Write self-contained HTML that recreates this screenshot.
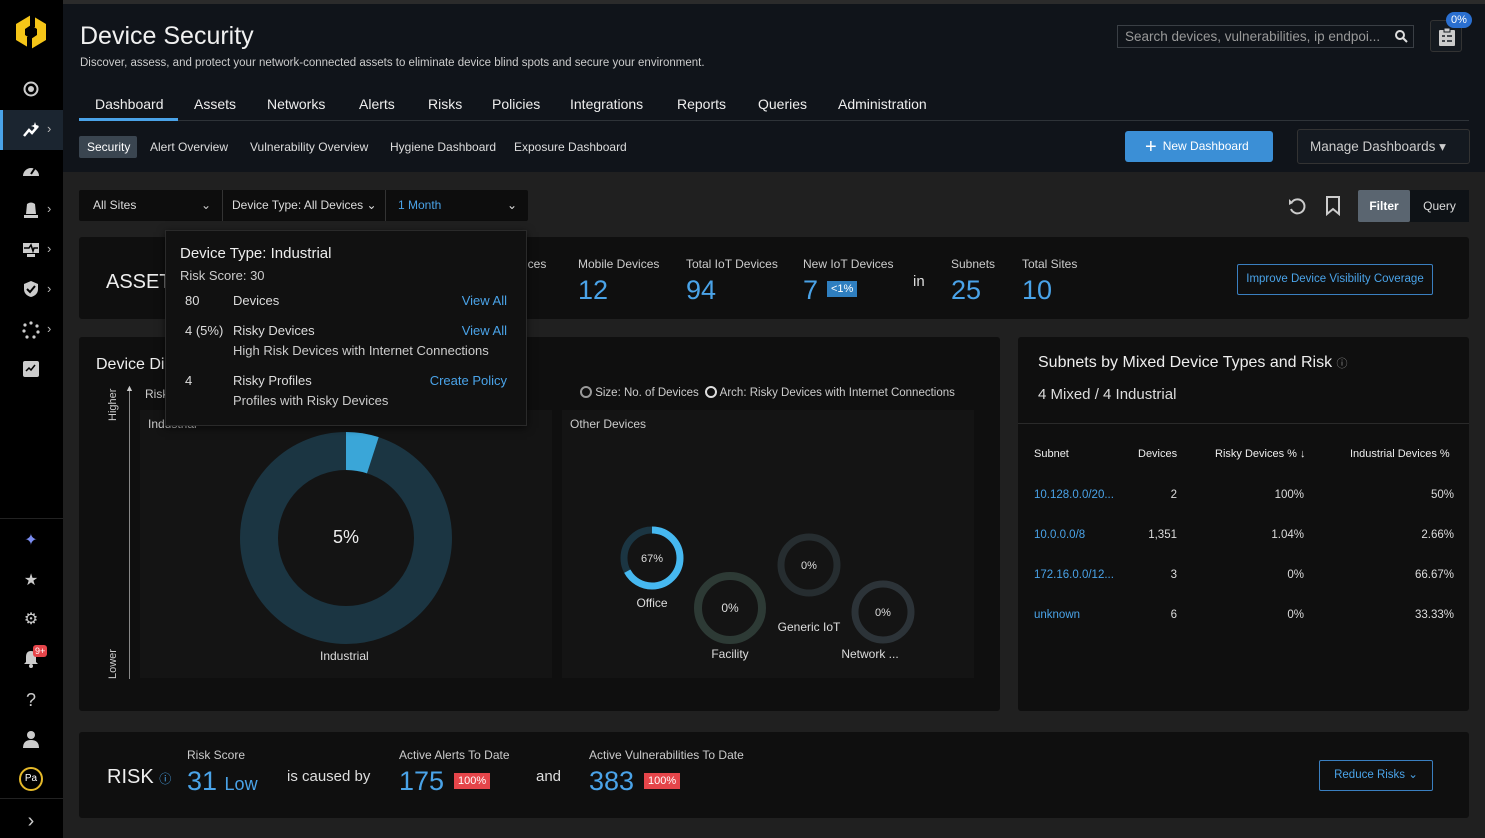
<!DOCTYPE html>
<html><head><meta charset="utf-8">
<style>
*{margin:0;padding:0;box-sizing:border-box}
body{width:1485px;height:838px;overflow:hidden;background:#202020;font-family:"Liberation Sans",sans-serif;color:#ddd;position:relative}
.a{position:absolute}
.blue{color:#4aa3e8}
.card{position:absolute;background:#0f0f0f;border-radius:3px}
.sb{position:absolute;left:0;top:0;width:63px;height:838px;background:#000}
.ic{position:absolute;left:22px;width:18px;height:18px;color:#ccc;font-size:16px;text-align:center}
.chev{position:absolute;left:47px;color:#bbb;font-size:13px}
.lbl{font-size:12px;color:#ccc}
.big{font-size:27px;color:#4aa3e8}
</style></head><body>
<div class="a" style="left:63px;top:0;width:1422px;height:172px;background:#10141a"></div>
<div class="a" style="left:63px;top:0;width:1422px;height:4px;background:#2b2b2b"></div>
<div class="sb">
 <svg class="a" style="left:15px;top:14px" width="32" height="36" viewBox="0 0 32 36"><path d="M16 1 L31 10 L31 26 L16 35 L1 26 L1 10Z" fill="#f5c518"/><path d="M16 11 L22 15 L22 21 L16 25 L10 21 L10 15Z" fill="#000"/><rect x="15" y="0" width="5" height="13" fill="#000"/><rect x="12" y="23" width="5" height="13" fill="#000"/></svg>
 <svg class="a" style="left:23px;top:81px" width="16" height="16"><circle cx="8" cy="8" r="6.5" fill="none" stroke="#ccc" stroke-width="2"/><circle cx="8" cy="8" r="3" fill="#ccc"/></svg>
 <div class="a" style="left:0;top:110px;width:63px;height:40px;background:#1b2530;border-left:3px solid #4aa3e8"></div>
 <svg class="a" style="left:22px;top:121px" width="18" height="18"><path d="M2 15 L7 9 L10 12 L16 5" fill="none" stroke="#fff" stroke-width="2.5"/><path d="M13 1 L14 4 L17 5 L14 6 L13 9 L12 6 L9 5 L12 4Z" fill="#fff"/></svg><div class="chev" style="top:121px">›</div>
 <svg class="a" style="left:22px;top:162px" width="18" height="16"><path d="M1 14 A8 8 0 1 1 17 14Z" fill="#ccc"/><path d="M9 12 L13 6" stroke="#000" stroke-width="2"/></svg>
 <svg class="a" style="left:22px;top:200px" width="18" height="18"><path d="M4 14 L5 4 Q9 1 13 4 L14 14Z" fill="#ccc"/><rect x="2" y="15" width="14" height="3" fill="#ccc"/></svg><div class="chev" style="top:201px">›</div>
 <svg class="a" style="left:22px;top:242px" width="18" height="16"><rect x="1" y="1" width="16" height="10" fill="#ccc"/><path d="M2 6 L7 6 L9 3 L11 9 L12 6 L16 6" stroke="#000" stroke-width="1.5" fill="none"/><rect x="5" y="12" width="8" height="3" fill="#ccc"/></svg><div class="chev" style="top:241px">›</div>
 <svg class="a" style="left:22px;top:280px" width="18" height="18"><path d="M9 1 L16 4 L16 9 Q16 15 9 17 Q2 15 2 9 L2 4Z" fill="#ccc"/><path d="M5 9 L8 12 L13 6" stroke="#000" stroke-width="2" fill="none"/></svg><div class="chev" style="top:281px">›</div>
 <svg class="a" style="left:22px;top:321px" width="18" height="18" fill="#ccc"><circle cx="9" cy="2" r="1.6"/><circle cx="15" cy="5" r="1.6"/><circle cx="16" cy="11" r="1.6"/><circle cx="12" cy="16" r="1.6"/><circle cx="5" cy="16" r="1.6"/><circle cx="2" cy="10" r="1.6"/><circle cx="3" cy="4" r="1.6"/></svg><div class="chev" style="top:321px">›</div>
 <svg class="a" style="left:23px;top:361px" width="16" height="16"><rect x="0" y="0" width="16" height="16" rx="2" fill="#ccc"/><path d="M3 10 L6 7 L8 9 L12 4" stroke="#000" stroke-width="1.5" fill="none"/></svg>
 <div class="a" style="left:0;top:518px;width:63px;height:1px;background:#222"></div>
 <div class="ic" style="top:530px;color:#7a8cf0">✦</div>
 <div class="ic" style="top:570px">★</div>
 <div class="ic" style="top:609px">⚙</div>
 <svg class="a" style="left:23px;top:650px" width="16" height="18"><path d="M8 1 Q3 1 3 7 L3 12 L1 14 L15 14 L13 12 L13 7 Q13 1 8 1Z" fill="#ccc"/><circle cx="8" cy="16" r="2" fill="#ccc"/></svg>
 <div class="a" style="left:33px;top:645px;background:#e5454a;color:#fff;font-size:9px;padding:1px 2px;border-radius:3px">9+</div>
 <div class="ic" style="top:690px;font-size:18px">?</div>
 <svg class="a" style="left:22px;top:730px" width="18" height="18" fill="#ccc"><circle cx="9" cy="5" r="4"/><path d="M1 18 Q1 10 9 10 Q17 10 17 18Z"/></svg>
 <div class="a" style="left:19px;top:767px;width:24px;height:24px;border:2px solid #e5b92a;border-radius:50%;font-size:10px;text-align:center;line-height:20px;color:#fff">Pa</div>
 <div class="a" style="left:0;top:798px;width:63px;height:1px;background:#222"></div>
 <div class="ic" style="top:810px;font-size:20px">›</div>
</div>

<div class="a" style="left:80px;top:22px;font-size:25px;color:#f0f0f0">Device Security</div>
<div class="a" style="left:80px;top:57px;font-size:11.5px;color:#ccc">Discover, assess, and protect your network-connected assets to eliminate device blind spots and secure your environment.</div>
<div class="a" style="left:1117px;top:25px;width:297px;height:23px;border:1px solid #3a3f45;font-size:13.5px;color:#999;padding:3px 7px">Search devices, vulnerabilities, ip endpoi...<svg style="position:absolute;right:5px;top:4px" width="13" height="13"><circle cx="5" cy="5" r="4" fill="none" stroke="#ddd" stroke-width="2"/><path d="M8 8 L12 12" stroke="#ddd" stroke-width="2"/></svg></div>
<div class="a" style="left:1430px;top:20px;width:32px;height:32px;border:1px solid #333;border-radius:3px;background:#151a20"><svg style="position:absolute;left:7px;top:6px" width="18" height="20"><rect x="1" y="3" width="16" height="16" rx="1" fill="#ccc"/><rect x="6" y="1" width="6" height="4" fill="#ccc" stroke="#151a20"/><path d="M4 9 L7 9 M9 9 L14 9 M4 14 L7 14 M9 14 L14 14" stroke="#151a20" stroke-width="1.5"/></svg></div>
<div class="a" style="left:1446px;top:12px;background:#2a6fd0;border-radius:9px;font-size:11px;color:#fff;padding:2px 5px">0%</div>

<div class="a" style="left:80px;top:96px;font-size:14px;color:#eee;white-space:nowrap">
<span style="position:absolute;left:15px">Dashboard</span><span style="position:absolute;left:114px">Assets</span><span style="position:absolute;left:187px">Networks</span><span style="position:absolute;left:279px">Alerts</span><span style="position:absolute;left:348px">Risks</span><span style="position:absolute;left:412px">Policies</span><span style="position:absolute;left:490px">Integrations</span><span style="position:absolute;left:597px">Reports</span><span style="position:absolute;left:678px">Queries</span><span style="position:absolute;left:758px">Administration</span></div>
<div class="a" style="left:79px;top:120px;width:1390px;height:1px;background:#2e3338"></div>
<div class="a" style="left:79px;top:118px;width:99px;height:3px;background:#4aa3e8"></div>

<div class="a" style="left:79px;top:136px;width:58px;height:22px;background:#3a4550;border-radius:2px"></div>
<div class="a" style="top:140px;left:80px;font-size:12px;color:#ddd;white-space:nowrap"><span style="position:absolute;left:7px;color:#fff">Security</span><span style="position:absolute;left:70px">Alert Overview</span><span style="position:absolute;left:170px">Vulnerability Overview</span><span style="position:absolute;left:310px">Hygiene Dashboard</span><span style="position:absolute;left:434px">Exposure Dashboard</span></div>
<div class="a" style="left:1125px;top:131px;width:148px;height:31px;background:#3b8fd6;border-radius:3px;color:#fff;font-size:12px;line-height:31px;padding-left:20px"><span style="font-size:20px;vertical-align:-3px;margin-right:6px">+</span>New Dashboard</div>
<div class="a" style="left:1297px;top:129px;width:173px;height:35px;border:1px solid #333;background:#141920;border-radius:3px;color:#ccc;font-size:13.5px;line-height:33px;padding-left:12px">Manage Dashboards ▾</div>

<div class="a" style="left:79px;top:190px;width:449px;height:31px;background:#0d0d0d;border-radius:2px;font-size:12px;line-height:31px">
<span class="a" style="left:14px">All Sites</span><span class="a" style="left:122px;color:#ccc">⌄</span>
<div class="a" style="left:143px;top:0;width:1px;height:31px;background:#333"></div>
<span class="a" style="left:153px">Device Type: All Devices ⌄</span>
<div class="a" style="left:306px;top:0;width:1px;height:31px;background:#333"></div>
<span class="a blue" style="left:319px">1 Month</span><span class="a" style="left:428px">⌄</span></div>
<svg class="a" style="left:1287px;top:196px" width="20" height="20"><path d="M5 6 A7 7 0 1 1 4 13" fill="none" stroke="#ccc" stroke-width="2"/><path d="M2 3 L6 7 L2 9Z" fill="#ccc"/></svg>
<svg class="a" style="left:1325px;top:196px" width="16" height="20"><path d="M2 1 L14 1 L14 18 L8 13 L2 18Z" fill="none" stroke="#ccc" stroke-width="2"/></svg>
<div class="a" style="left:1358px;top:190px;width:52px;height:32px;background:#5a6570;border-radius:2px;color:#fff;font-size:12px;font-weight:bold;text-align:center;line-height:32px">Filter</div>
<div class="a" style="left:1410px;top:190px;width:59px;height:32px;background:#0e1216;color:#ddd;font-size:12px;text-align:center;line-height:32px">Query</div>

<div class="card" style="left:79px;top:237px;width:1390px;height:82px">
 <div class="a" style="left:27px;top:34px;font-size:20px;color:#eee">ASSET</div>
 <div class="a lbl" style="left:440px;top:20px">vices</div>
 <div class="a lbl" style="left:499px;top:20px">Mobile Devices</div><div class="a big" style="left:499px;top:38px">12</div>
 <div class="a lbl" style="left:607px;top:20px">Total IoT Devices</div><div class="a big" style="left:607px;top:38px">94</div>
 <div class="a lbl" style="left:724px;top:20px">New IoT Devices</div><div class="a big" style="left:724px;top:38px">7</div>
 <div class="a" style="left:748px;top:44px;background:#2f7fc0;color:#fff;font-size:11px;padding:2px 4px">&lt;1%</div>
 <div class="a" style="left:834px;top:36px;font-size:15px;color:#ddd">in</div>
 <div class="a lbl" style="left:872px;top:20px">Subnets</div><div class="a big" style="left:872px;top:38px">25</div>
 <div class="a lbl" style="left:943px;top:20px">Total Sites</div><div class="a big" style="left:943px;top:38px">10</div>
 <div class="a" style="left:1158px;top:27px;width:196px;height:31px;border:1px solid #3a7fc0;border-radius:2px;color:#4aa3e8;font-size:11.5px;text-align:center;line-height:29px">Improve Device Visibility Coverage</div>
</div>

<div class="card" style="left:79px;top:337px;width:921px;height:374px">
 <div class="a" style="left:17px;top:19px;font-size:16px;color:#eee">Device Di</div>
 <div class="a" style="left:501px;top:49px;font-size:11.5px;color:#ccc"><span style="display:inline-block;width:12px;height:12px;border:2px solid #999;border-radius:50%;vertical-align:-2px"></span> Size: No. of Devices &nbsp;<span style="display:inline-block;width:12px;height:12px;border:2px solid #ddd;border-radius:50%;vertical-align:-2px"></span> Arch: Risky Devices with Internet Connections</div>
 <div class="a" style="left:28px;font-size:11px;color:#ccc;transform:rotate(-90deg);transform-origin:left top;top:84px">Higher</div>
 <div class="a" style="left:28px;top:342px;font-size:11px;color:#ccc;transform:rotate(-90deg);transform-origin:left top">Lower</div>
 <div class="a" style="left:50px;top:52px;width:1px;height:290px;background:#888"></div>
 <div class="a" style="left:46px;top:46px;font-size:9px;color:#ccc">▲</div>
 <div class="a" style="left:66px;top:50px;font-size:12px;color:#ccc">Risk</div>
 <div class="a" style="left:61px;top:73px;width:412px;height:268px;background:#141414"></div>
 <div class="a" style="left:69px;top:80px;font-size:12px;color:#ccc">Industrial</div>
 <svg class="a" style="left:159px;top:93px" width="216" height="216"><circle cx="108" cy="108" r="87" fill="none" stroke="#1b3542" stroke-width="38"/><circle cx="108" cy="108" r="87" fill="none" stroke="#3aa6d8" stroke-width="38" stroke-dasharray="27.3 520" transform="rotate(-90 108 108)"/></svg>
 <div class="a" style="left:254px;top:190px;font-size:18px;color:#eee">5%</div>
 <div class="a" style="left:241px;top:312px;font-size:12px;color:#ddd">Industrial</div>
 <div class="a" style="left:483px;top:73px;width:412px;height:268px;background:#141414"></div>
 <div class="a" style="left:491px;top:80px;font-size:12px;color:#ccc">Other Devices</div>
 <svg class="a" style="left:483px;top:73px" width="412" height="268">
  <circle cx="90" cy="148" r="28" fill="none" stroke="#1b3542" stroke-width="7"/>
  <circle cx="90" cy="148" r="28" fill="none" stroke="#46b8f0" stroke-width="7" stroke-dasharray="118 200" transform="rotate(-90 90 148)"/>
  <circle cx="168" cy="198" r="32" fill="none" stroke="#2d3a35" stroke-width="8"/>
  <circle cx="247" cy="155" r="28" fill="none" stroke="#262d30" stroke-width="7"/>
  <circle cx="321" cy="202" r="28" fill="none" stroke="#2c3338" stroke-width="7"/>
  <g fill="#ddd" font-family="Liberation Sans" font-size="11" text-anchor="middle">
   <text x="90" y="152">67%</text><text x="168" y="202" font-size="12">0%</text><text x="247" y="159">0%</text><text x="321" y="206">0%</text>
  </g>
  <g fill="#ddd" font-family="Liberation Sans" font-size="12" text-anchor="middle">
   <text x="90" y="197">Office</text><text x="168" y="248">Facility</text><text x="247" y="221">Generic IoT</text><text x="308" y="248">Network ...</text>
  </g>
 </svg>
</div>

<div class="card" style="left:1018px;top:337px;width:451px;height:374px">
 <div class="a" style="left:20px;top:17px;font-size:16px;color:#eee">Subnets by Mixed Device Types and Risk <span style="font-size:11px;color:#888">ⓘ</span></div>
 <div class="a" style="left:20px;top:49px;font-size:15px;color:#ddd">4 Mixed / 4 Industrial</div>
 <div class="a" style="left:0;top:86px;width:451px;height:1px;background:#2a2a2a"></div>
 <div class="a" style="left:16px;top:111px;font-size:11px;color:#eee;width:420px;white-space:nowrap">
  <span class="a" style="left:0">Subnet</span><span class="a" style="left:104px">Devices</span><span class="a" style="left:181px">Risky Devices % ↓</span><span class="a" style="left:316px">Industrial Devices %</span></div>
 <div class="a" style="left:16px;top:138px;width:420px;font-size:11.5px;color:#ddd;line-height:40px">
  <div style="position:relative;height:40px"><span class="a blue" style="left:0">10.128.0.0/20...</span><span class="a" style="right:277px">2</span><span class="a" style="right:150px">100%</span><span class="a" style="right:0">50%</span></div>
  <div style="position:relative;height:40px"><span class="a blue" style="left:0">10.0.0.0/8</span><span class="a" style="right:277px">1,351</span><span class="a" style="right:150px">1.04%</span><span class="a" style="right:0">2.66%</span></div>
  <div style="position:relative;height:40px"><span class="a blue" style="left:0">172.16.0.0/12...</span><span class="a" style="right:277px">3</span><span class="a" style="right:150px">0%</span><span class="a" style="right:0">66.67%</span></div>
  <div style="position:relative;height:40px"><span class="a blue" style="left:0">unknown</span><span class="a" style="right:277px">6</span><span class="a" style="right:150px">0%</span><span class="a" style="right:0">33.33%</span></div>
 </div>
</div>

<div class="card" style="left:79px;top:732px;width:1390px;height:86px">
 <div class="a" style="left:28px;top:34px;font-size:20px;color:#eee">RISK <span style="font-size:12px;color:#4aa3e8">ⓘ</span></div>
 <div class="a lbl" style="left:108px;top:16px">Risk Score</div>
 <div class="a big" style="left:108px;top:34px">31 <span style="font-size:18px">Low</span></div>
 <div class="a" style="left:208px;top:36px;font-size:15px;color:#ddd">is caused by</div>
 <div class="a lbl" style="left:320px;top:16px">Active Alerts To Date</div>
 <div class="a big" style="left:320px;top:34px">175</div>
 <div class="a" style="left:375px;top:41px;background:#e5454a;color:#fff;font-size:11px;padding:2px 4px">100%</div>
 <div class="a" style="left:457px;top:36px;font-size:15px;color:#ddd">and</div>
 <div class="a lbl" style="left:510px;top:16px">Active Vulnerabilities To Date</div>
 <div class="a big" style="left:510px;top:34px">383</div>
 <div class="a" style="left:565px;top:41px;background:#e5454a;color:#fff;font-size:11px;padding:2px 4px">100%</div>
 <div class="a" style="left:1240px;top:28px;width:114px;height:31px;border:1px solid #3a7fc0;border-radius:2px;color:#4aa3e8;font-size:11.5px;text-align:center;line-height:29px">Reduce Risks ⌄</div>
</div>

<div class="a" style="left:165px;top:230px;width:362px;height:196px;background:#111;border:1px solid #2a2a2a;box-shadow:0 2px 8px rgba(0,0,0,.6)">
 <div class="a" style="left:14px;top:14px;font-size:15px;color:#eee">Device Type: Industrial</div>
 <div class="a" style="left:14px;top:37px;font-size:13px;color:#ccc">Risk Score: 30</div>
 <div class="a" style="left:19px;top:62px;font-size:13px;color:#ddd">80</div><div class="a" style="left:67px;top:62px;font-size:13px;color:#ddd">Devices</div><div class="a blue" style="right:19px;top:62px;font-size:13px">View All</div>
 <div class="a" style="left:19px;top:92px;font-size:13px;color:#ddd">4 (5%)</div><div class="a" style="left:67px;top:92px;font-size:13px;color:#ddd">Risky Devices</div><div class="a blue" style="right:19px;top:92px;font-size:13px">View All</div>
 <div class="a" style="left:67px;top:112px;font-size:13px;color:#ccc">High Risk Devices with Internet Connections</div>
 <div class="a" style="left:19px;top:142px;font-size:13px;color:#ddd">4</div><div class="a" style="left:67px;top:142px;font-size:13px;color:#ddd">Risky Profiles</div><div class="a blue" style="right:19px;top:142px;font-size:13px">Create Policy</div>
 <div class="a" style="left:67px;top:162px;font-size:13px;color:#ccc">Profiles with Risky Devices</div>
</div>
</body></html>
